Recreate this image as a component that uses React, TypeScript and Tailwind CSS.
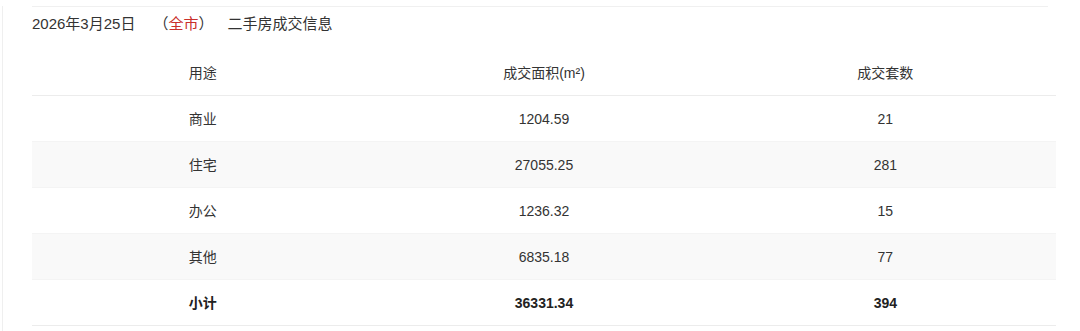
const rows = [
  { use: "商业", area: "1204.59", count: "21" },
  { use: "住宅", area: "27055.25", count: "281" },
  { use: "办公", area: "1236.32", count: "15" },
  { use: "其他", area: "6835.18", count: "77" },
];

export default function App() {
  return (
    <div
      className="w-[1080px] h-[331px] bg-white text-[#333] overflow-hidden"
      style={{ fontFamily: '"Liberation Sans", "Noto Sans CJK SC", sans-serif' }}
    >
      <div className="ml-[2px] h-full border-l border-[#efefef]">
        <div className="ml-[29px] mr-[32px] mt-[6px] border-t border-[#f0f0f0] h-[36px] flex items-center text-[15px]">
          <span>2026年3月25日</span>
          <span className="ml-[18px]">（</span>
          <span className="text-[#c9302c]">全市</span>
          <span>）</span>
          <span className="ml-[14px]">二手房成交信息</span>
        </div>

        <div className="ml-[29px] w-[1024px] text-[14px]">
          <div className="grid grid-cols-3 h-[54px] pt-[9px] items-center text-center border-b border-[#ececec]">
            <div>用途</div>
            <div>成交面积(m²)</div>
            <div>成交套数</div>
          </div>

          {rows.map((r, i) => (
            <div
              key={r.use}
              className={`grid grid-cols-3 h-[46px] pt-[2px] items-center text-center border-b border-[#f4f4f4] ${
                i % 2 === 1 ? "bg-[#f9f9f9]" : "bg-white"
              }`}
            >
              <div>{r.use}</div>
              <div>{r.area}</div>
              <div>{r.count}</div>
            </div>
          ))}

          <div className="grid grid-cols-3 h-[46px] pt-[2px] items-center text-center font-bold text-[#222] border-b border-[#ececec]">
            <div>小计</div>
            <div>36331.34</div>
            <div>394</div>
          </div>
        </div>
      </div>
    </div>
  );
}
